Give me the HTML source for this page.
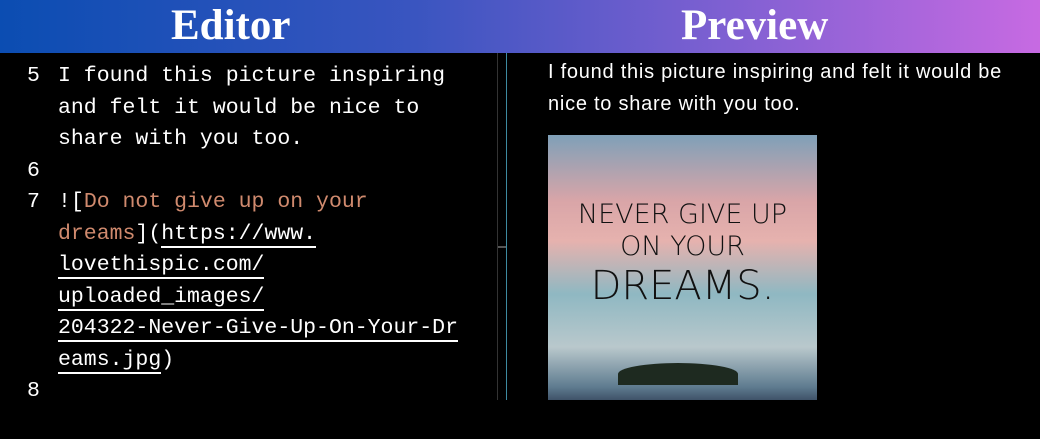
<!DOCTYPE html>
<html><head><style>
body{margin:0;width:1040px;height:400px;overflow:hidden;background:#000;position:relative;font-family:"Liberation Sans",sans-serif}
.hdr{position:absolute;left:0;top:0;width:1040px;height:53px;background:linear-gradient(90deg,#0b4db2 0%,#3a55c0 40%,#7f60d2 70%,#c76ae2 100%)}
.hdr span{position:absolute;top:1px;color:#fff;font-family:"Liberation Serif",serif;font-weight:bold;font-size:43px}
.ed{position:absolute;left:0;top:61px;font-family:"Liberation Mono",monospace;font-size:21.5px;line-height:31.5px;color:#fff;white-space:pre}
.n{position:absolute;left:27px}
.t{position:absolute;left:58px}
.o{color:#d08a6e}
.u{border-bottom:2px solid #fff}
.pv{position:absolute;left:548px;top:56px;color:#fff;font-size:20px;letter-spacing:0.75px;line-height:32px;white-space:nowrap}
.img{position:absolute;left:548px;top:135px;width:269px;height:265px;background:linear-gradient(180deg,#7fa0b8 0%,#d9a5a8 25%,#e6b2ae 40%,#8fb8c2 60%,#b9c8cc 80%,#5f7c90 95%,#3f5268 100%);overflow:hidden}
.img div{position:absolute;width:100%;text-align:center;color:#111;font-family:"DejaVu Sans",sans-serif;font-weight:200}
</style></head><body>
<div class="hdr"><span style="left:171px">Editor</span><span style="left:681px">Preview</span></div>
<div style="position:absolute;left:497px;top:53px;width:1px;height:347px;background:#333"></div>
<div style="position:absolute;left:506px;top:53px;width:1px;height:347px;background:#3d8aa0"></div>
<div style="position:absolute;left:498px;top:246px;width:8px;height:2px;background:#555"></div>
<div class="ed">
<div class="n" style="top:0">5</div><div class="t" style="top:0">I found this picture inspiring</div>
<div class="t" style="top:31.5px">and felt it would be nice to</div>
<div class="t" style="top:63px">share with you too.</div>
<div class="n" style="top:94.5px">6</div>
<div class="n" style="top:126px">7</div><div class="t" style="top:126px">![<span class="o">Do not give up on your</span></div>
<div class="t" style="top:157.5px"><span class="o">dreams</span>](<span class="u">https://www.</span></div>
<div class="t" style="top:189px"><span class="u">lovethispic.com/</span></div>
<div class="t" style="top:220.5px"><span class="u">uploaded_images/</span></div>
<div class="t" style="top:252px"><span class="u">204322-Never-Give-Up-On-Your-Dr</span></div>
<div class="t" style="top:283.5px"><span class="u">eams.jpg</span>)</div>
<div class="n" style="top:315px">8</div>
</div>
<div class="pv">I found this picture inspiring and felt it would be<br>nice to share with you too.</div>
<div class="img">
<div style="top:64px;font-size:27px">NEVER GIVE UP</div>
<div style="top:96px;font-size:27px">ON YOUR</div>
<div style="top:128px;font-size:40px">DREAMS.</div>
<div style="left:70px;top:228px;width:120px;height:22px;background:#1e2a20;border-radius:50% 50% 0 0"></div>
</div>
</body></html>
